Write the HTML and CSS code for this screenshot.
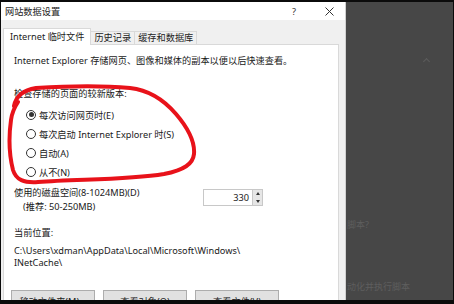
FILE: index.html
```html
<!DOCTYPE html>
<html lang="zh-CN">
<head>
  <meta charset="UTF-8" />
  <title>网站数据设置</title>
  <link rel="stylesheet" href="styles.css">
</head>
<body>

<div class="screen">
  <div class="dialog">
    <div class="titlebar">
      <span class="title">网站数据设置</span>
      <span class="help">?</span>
      <svg class="close" width="9" height="9" viewBox="0 0 9 9">
        <path d="M0.5 0.5 L8.5 8.5 M8.5 0.5 L0.5 8.5" stroke="#333" stroke-width="1" fill="none" />
      </svg>
    </div>

    <div class="tabs">
      <div class="tab active">Internet 临时文件</div>
      <div class="tab">历史记录</div>
      <div class="tab">缓存和数据库</div>
    </div>

    <div class="panel">
      <p class="intro">Internet Explorer 存储网页、图像和媒体的副本以便以后快速查看。</p>

      <p class="label">检查存储的页面的较新版本:</p>
      <div class="radios">
        <label class="radio"><span class="dot checked"></span>每次访问网页时(E)</label>
        <label class="radio"><span class="dot"></span>每次启动 Internet Explorer 时(S)</label>
        <label class="radio"><span class="dot"></span>自动(A)</label>
        <label class="radio"><span class="dot"></span>从不(N)</label>
      </div>

      <div class="disk-row">
        <div class="disk-text">
          <div>使用的磁盘空间(8-1024MB)(D)</div>
          <div class="hint">(推荐: 50-250MB)</div>
        </div>
        <div class="spin">
          <div class="spin-value">330</div>
          <div class="spin-btns">
            <span class="arrow up"></span>
            <span class="arrow down"></span>
          </div>
        </div>
      </div>

      <p class="label where">当前位置:</p>
      <div class="path">
        <div>C:\Users\xdman\AppData\Local\Microsoft\Windows\</div>
        <div>INetCache\</div>
      </div>

      <div class="buttons">
        <button class="btn">移动文件夹(M)...</button>
        <button class="btn">查看对象(O)</button>
        <button class="btn">查看文件(V)</button>
      </div>
    </div>

    <!-- hand-drawn annotation -->
    <svg class="scribble" width="210" height="110" viewBox="0 0 210 110">
      <path d="M16 22 C18 12, 26 6, 38 4 C70 2, 110 2, 132 4 C150 6, 166 16, 178 30
               C190 44, 197 58, 196 70 C195 80, 186 86, 166 90 C130 96, 80 95, 40 98
               C26 99, 18 96, 15 86 C11 70, 11 50, 13 36 C14 28, 16 24, 20 18"
            stroke="#e8121a" stroke-width="4" fill="none" stroke-linecap="round" />
    </svg>
  </div>

  <div class="backdrop">
    <div class="scroll-up"></div>
    <div class="faint first">脚本?</div>
    <div class="faint second">动化并执行脚本</div>
  </div>
</div>

</body>
</html>
```

FILE: styles.css
```css
* {
  box-sizing: border-box;
}

body {
  margin: 0;
  width: 454px;
  height: 304px;
  overflow: hidden;
  background: #0b0b0b;
  font-family: "Noto Sans", "Noto Sans CJK SC", sans-serif;
  font-size: 9.2px;
  color: #1a1a1a;
}

p {
  margin: 0;
}

.screen {
  display: flex;
  height: 304px;
  padding: 2px 1px 4px 1px;
}

.dialog {
  position: relative;
  width: 345px;
  flex-shrink: 0;
  background: #f0f0f0;
  border-right: 1px solid #d0d0d0;
  overflow: hidden;
}

.titlebar {
  height: 18px;
  background: #fff;
  display: flex;
  align-items: center;
  padding-left: 4px;
}

.title {
  flex: 1;
  color: #222;
}

.help {
  color: #333;
  margin-right: 29px;
}

.close {
  margin-right: 11px;
}

.tabs {
  display: flex;
  align-items: flex-end;
  margin: 7px 0 0 2px;
  height: 17px;
  white-space: nowrap;
}

.tab {
  height: 13px;
  line-height: 12px;
  padding: 0 3px;
  border: 1px solid #d9d9d9;
  border-bottom: none;
  border-left: none;
  background: #f0f0f0;
  color: #222;
}

.tab.active {
  height: 17px;
  line-height: 15px;
  padding: 0 6px;
  border-left: 1px solid #d9d9d9;
  background: #fff;
  margin-bottom: -1px;
  position: relative;
}

.panel {
  margin-left: 2px;
  width: 336px;
  height: 280px;
  background: #fff;
  border: 1px solid #d9d9d9;
  padding: 0 0 0 10px;
}

.intro {
  line-height: 12px;
  margin-top: 10px;
}

.label {
  line-height: 12px;
  margin-top: 21px;
}

.radios {
  margin-top: 5px;
}

.radio {
  display: flex;
  align-items: center;
  height: 19px;
  padding-left: 12px;
}

.dot {
  width: 10px;
  height: 10px;
  border: 1px solid #333;
  border-radius: 50%;
  margin-right: 3px;
  display: flex;
  align-items: center;
  justify-content: center;
}

.dot.checked::after {
  content: "";
  width: 5px;
  height: 5px;
  border-radius: 50%;
  background: #333;
}

.disk-row {
  display: flex;
  margin-top: 5px;
}

.disk-text {
  width: 189px;
  line-height: 14px;
}

.hint {
  padding-left: 9px;
}

.spin {
  display: flex;
  margin-top: 3px;
  height: 17px;
}

.spin-value {
  width: 50px;
  border: 1px solid #c8c8c8;
  text-align: right;
  padding-right: 3px;
  line-height: 15px;
}

.spin-btns {
  width: 10px;
  display: flex;
  flex-direction: column;
  border: 1px solid #c8c8c8;
  border-left: none;
  background: #e6e6e6;
}

.arrow {
  flex: 1;
  display: flex;
  align-items: center;
  justify-content: center;
}

.arrow::after {
  content: "";
  border-left: 2px solid transparent;
  border-right: 2px solid transparent;
}

.arrow.up::after {
  border-bottom: 3px solid #333;
}

.arrow.down::after {
  border-top: 3px solid #333;
}

.where {
  margin-top: 13px;
}

.path {
  margin-top: 6px;
  line-height: 12px;
}

.buttons {
  display: flex;
  gap: 8px;
  margin: 21px 0 0 -3px;
}

.btn {
  width: 84px;
  height: 21px;
  background: #e1e1e1;
  border: 1px solid #adadad;
  font-family: inherit;
  font-size: 9.2px;
  color: #1a1a1a;
  padding: 0;
}

.scribble {
  position: absolute;
  left: -3px;
  top: 82px;
}

.backdrop {
  flex: 1;
  position: relative;
  background: #474747;
  color: #5e5e5e;
}

.scroll-up {
  position: absolute;
  left: 78px;
  top: 57px;
  width: 5px;
  height: 5px;
  border-left: 1px solid #5c5c5c;
  border-top: 1px solid #5c5c5c;
  transform: rotate(45deg);
}

.faint {
  position: absolute;
  left: 1px;
  font-size: 9px;
}

.faint.first {
  top: 216px;
}

.faint.second {
  top: 278px;
}
```
